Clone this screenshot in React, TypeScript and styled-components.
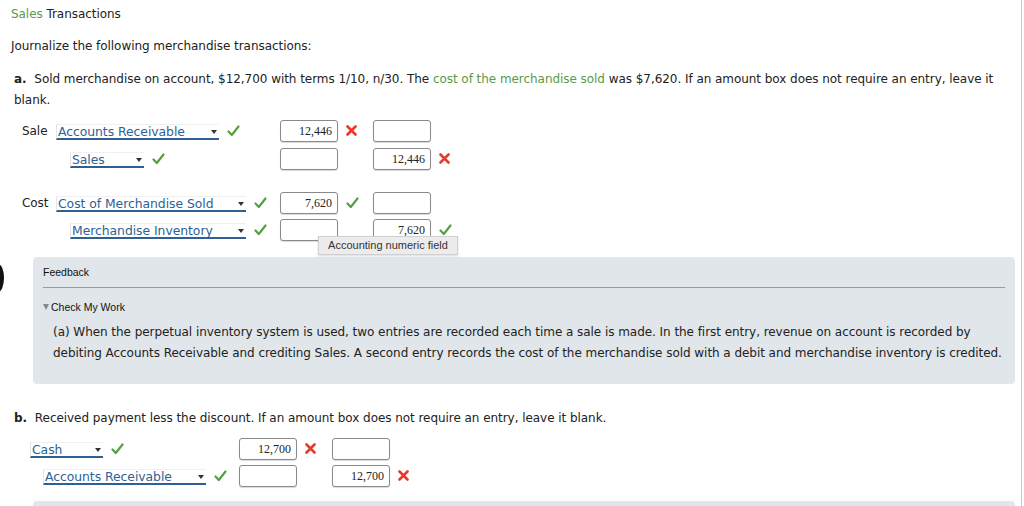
import React from "react";
import styled, { createGlobalStyle } from "styled-components";

// THEMING
const textFont = `"DejaVu Sans", Verdana, sans-serif`;
const uiFont = `"Liberation Sans", Arial, sans-serif`;
const numFont = `"Liberation Serif", "Times New Roman", serif`;
const green = "#5b9a48";
const selectBlue = "#2f5f94";
const panelBg = "#e0e6ea";

const GlobalStyle = createGlobalStyle`
  body {
    margin: 0;
    background: #fff;
    font-family: ${textFont};
    color: #222;
  }
`;

const Page = styled.div`
  position: relative;
  width: 1022px;
  height: 506px;
  overflow: hidden;
  border-right: 1px solid #c8c8c8;
  padding: 5px 0 0 0;
  box-sizing: border-box;
  font-size: 12px;
  letter-spacing: -0.05px;
`;

const Title = styled.div`
  padding-left: 11px;
  line-height: 18px;
`;

const Green = styled.span`
  color: ${green};
`;

const Intro = styled.div`
  padding-left: 11px;
  margin-top: 14px;
  line-height: 18px;
`;

const Question = styled.div<{ $top: number }>`
  padding: 0 20px 0 14px;
  margin-top: ${({ $top }) => $top}px;
  line-height: 21px;
  b {
    font-weight: bold;
    margin-right: 4px;
  }
`;

const Journal = styled.div<{ $left: number; $top: number }>`
  padding-left: ${({ $left }) => $left}px;
  margin-top: ${({ $top }) => $top}px;
  display: flex;
  flex-direction: column;
`;

const Row = styled.div<{ $gapTop?: number }>`
  display: flex;
  align-items: center;
  height: 27px;
  margin-top: ${({ $gapTop }) => $gapTop || 0}px;
`;

const AccountCell = styled.div<{ $width: number; $indent: number }>`
  width: ${({ $width }) => $width}px;
  padding-left: ${({ $indent }) => $indent}px;
  box-sizing: border-box;
  display: flex;
  align-items: center;
  flex-shrink: 0;
`;

const EntryLabel = styled.span`
  width: 34px;
  flex-shrink: 0;
`;

const Select = styled.div<{ $width: number }>`
  width: ${({ $width }) => $width}px;
  box-sizing: border-box;
  display: flex;
  align-items: center;
  justify-content: space-between;
  color: ${selectBlue};
  font-size: 12.4px;
  height: 16px;
  line-height: 15px;
  padding: 0 2px 0 1px;
  border-left: 1px solid #e4e4e4;
  border-top: 1px solid #f0f0f0;
  border-bottom: 2px solid ${selectBlue};
  margin-top: 2px;
`;

const Arrow = styled.span`
  width: 0;
  height: 0;
  border-left: 3.5px solid transparent;
  border-right: 3.5px solid transparent;
  border-top: 4px solid #333;
  margin-top: 1px;
`;

const MarkSlot = styled.span<{ $width: number }>`
  width: ${({ $width }) => $width}px;
  display: flex;
  align-items: center;
  justify-content: flex-start;
  padding-left: 8px;
  box-sizing: border-box;
  flex-shrink: 0;
`;

const Amount = styled.div`
  width: 58px;
  height: 22px;
  box-sizing: border-box;
  border: 1px solid #8a8a8a;
  border-radius: 3px;
  box-shadow: 0 1px 1px rgba(0, 0, 0, 0.15);
  font-family: ${numFont};
  font-size: 12px;
  letter-spacing: 0;
  text-align: right;
  padding: 0 5px;
  line-height: 20px;
  color: #222;
  flex-shrink: 0;
  background: #fff;
`;

const Tooltip = styled.div`
  position: absolute;
  left: 318px;
  top: 236px;
  width: 140px;
  height: 19px;
  box-sizing: border-box;
  background: #ececec;
  border: 1px solid #d0d0d0;
  box-shadow: 0 1px 2px rgba(0, 0, 0, 0.15);
  font-family: ${uiFont};
  font-size: 11px;
  letter-spacing: 0;
  color: #333;
  line-height: 17px;
  text-align: center;
  z-index: 2;
`;

const Panel = styled.div<{ $top: number }>`
  margin: ${({ $top }) => $top}px 6px 0 33px;
  background: ${panelBg};
  border-radius: 4px;
  padding: 9px 10px 20px 10px;
  min-height: 20px;
`;

const PanelHead = styled.div`
  font-family: ${uiFont};
  font-size: 10.5px;
  letter-spacing: 0;
  color: #111;
  line-height: 12px;
  padding-bottom: 9px;
  border-bottom: 1px solid #9a9a9a;
`;

const Toggle = styled.div`
  font-family: ${uiFont};
  font-size: 10.5px;
  letter-spacing: 0;
  color: #111;
  margin-top: 12px;
  line-height: 14px;
  display: flex;
  align-items: center;
  gap: 2px;
  &::before {
    content: "";
    width: 0;
    height: 0;
    border-left: 3.5px solid transparent;
    border-right: 3.5px solid transparent;
    border-top: 6px solid #888;
  }
`;

const Explain = styled.p`
  margin: 8px 0 0 10px;
  line-height: 21px;
`;

const Line = styled.span`
  display: block;
`;

const Edge = styled.div`
  position: absolute;
  left: -8px;
  top: 264px;
  width: 12px;
  height: 28px;
  border-radius: 50%;
  background: #111;
`;

const Check = () => (
  <svg width="13" height="12" viewBox="0 0 13 12">
    <path d="M1.5 6.5 L4.8 10 L11.5 1.5" fill="none" stroke="#55a041" strokeWidth="2.2" strokeLinecap="round" strokeLinejoin="round" />
  </svg>
);

const Cross = () => (
  <svg width="11" height="11" viewBox="0 0 11 11">
    <path d="M1.5 1.5 L9.5 9.5 M9.5 1.5 L1.5 9.5" stroke="#e8392b" strokeWidth="2.6" strokeLinecap="round" />
  </svg>
);

interface LineProps {
  label?: string;
  account: string;
  selectWidth: number;
  indent: number;
  cellWidth: number;
  debit?: string;
  credit?: string;
  debitMark?: "ok" | "bad";
  creditMark?: "ok" | "bad";
  gapTop?: number;
}

const Mark = ({ kind }: { kind?: "ok" | "bad" }) =>
  kind === "ok" ? <Check /> : kind === "bad" ? <Cross /> : null;

const JournalLine = ({ label, account, selectWidth, indent, cellWidth, debit, credit, debitMark, creditMark, gapTop }: LineProps) => (
  <Row $gapTop={gapTop}>
    <AccountCell $width={cellWidth} $indent={indent}>
      {label && <EntryLabel>{label}</EntryLabel>}
      <Select $width={selectWidth}>
        <span>{account}</span>
        <Arrow />
      </Select>
      <MarkSlot $width={30}>
        <Check />
      </MarkSlot>
    </AccountCell>
    <Amount>{debit}</Amount>
    <MarkSlot $width={35}>
      <Mark kind={debitMark} />
    </MarkSlot>
    <Amount>{credit}</Amount>
    <MarkSlot $width={35}>
      <Mark kind={creditMark} />
    </MarkSlot>
  </Row>
);

export default function App() {
  return (
    <Page>
      <GlobalStyle />
      <Edge />
      <Title>
        <Green>Sales</Green> Transactions
      </Title>
      <Intro>Journalize the following merchandise transactions:</Intro>
      <Question $top={14}>
        <Line>
          <b>a.</b> Sold merchandise on account, $12,700 with terms 1/10, n/30. The <Green>cost of the merchandise sold</Green> was
          $7,620. If an amount box does not require an entry, leave it
        </Line>
        <Line>blank.</Line>
      </Question>
      <Journal $left={22} $top={6}>
        <JournalLine label="Sale" account="Accounts Receivable" selectWidth={163} indent={0} cellWidth={258} debit="12,446" debitMark="bad" />
        <JournalLine account="Sales" selectWidth={74} indent={48} cellWidth={258} credit="12,446" creditMark="bad" gapTop={1} />
        <JournalLine label="Cost" account="Cost of Merchandise Sold" selectWidth={190} indent={0} cellWidth={258} debit="7,620" debitMark="ok" gapTop={17} />
        <JournalLine account="Merchandise Inventory" selectWidth={176} indent={48} cellWidth={258} credit="7,620" creditMark="ok" />
      </Journal>
      <Tooltip>Accounting numeric field</Tooltip>
      <Panel $top={14}>
        <PanelHead>Feedback</PanelHead>
        <Toggle>Check My Work</Toggle>
        <Explain>
          <Line>
            (a) When the perpetual inventory system is used, two entries are recorded each time a sale is made. In the
            first entry, revenue on account is recorded by
          </Line>
          <Line>
            debiting Accounts Receivable and crediting Sales. A second entry records the cost of the merchandise sold with
            a debit and merchandise inventory is credited.
          </Line>
        </Explain>
      </Panel>
      <Question $top={24}>
        <b>b.</b> Received payment less the discount. If an amount box does not require an entry, leave it blank.
      </Question>
      <Journal $left={30} $top={6}>
        <JournalLine account="Cash" selectWidth={73} indent={0} cellWidth={209} debit="12,700" debitMark="bad" />
        <JournalLine account="Accounts Receivable" selectWidth={163} indent={13} cellWidth={209} credit="12,700" creditMark="bad" />
      </Journal>
      <Panel $top={12} />
    </Page>
  );
}
